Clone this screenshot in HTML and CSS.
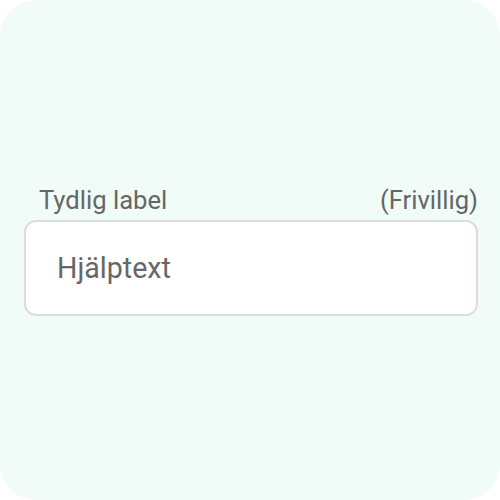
FILE: index.html
```html
<!DOCTYPE html>
<html lang="sv">
<head>
<meta charset="utf-8">
<link rel="stylesheet" href="styles.css">
</head>
<body>
<div class="screen">
  <div class="field">
    <div class="field-head">
      <span class="label">Tydlig label</span>
      <span class="optional">(Frivillig)</span>
    </div>
    <input class="input" type="text" placeholder="Hjälptext">
  </div>
</div>
</body>
</html>
```

FILE: styles.css
```css
html, body {
  margin: 0;
  padding: 0;
  background: #ffffff;
}
.screen {
  width: 500px;
  height: 500px;
  box-sizing: border-box;
  background: #f1fbf8;
  border-radius: 36px;
  display: flex;
  flex-direction: column;
  justify-content: center;
  padding: 0 22px 0 24px;
  font-family: Roboto, "Liberation Sans", sans-serif;
}
.field {
  display: flex;
  flex-direction: column;
  gap: 6px;
  margin-top: 2px;
}
.field-head {
  display: flex;
  justify-content: space-between;
  align-items: baseline;
  padding: 0 0 0 15px;
  font-size: 25.6px;
  line-height: 28px;
  color: #666666;
}
.input {
  box-sizing: border-box;
  height: 96px;
  width: 100%;
  border: 2px solid #dddddd;
  border-radius: 12px;
  background: #ffffff;
  padding: 0 0 0 31px;
  font-family: Roboto, "Liberation Sans", sans-serif;
  font-size: 28.6px;
  color: #333333;
  outline: none;
}
.input::placeholder {
  color: #666666;
  opacity: 1;
}
```
